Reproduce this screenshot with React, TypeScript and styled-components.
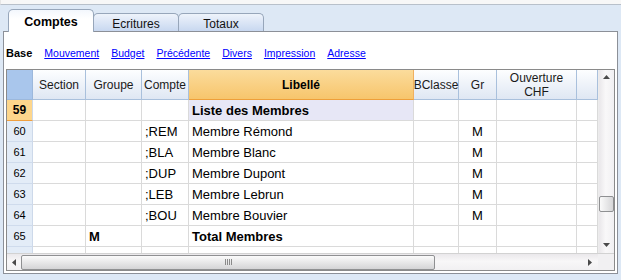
import React from "react";
import styled, { createGlobalStyle, css } from "styled-components";

const GlobalStyle = createGlobalStyle`
  html, body {
    margin: 0;
    padding: 0;
    background: #dde8f5;
    font-family: "Liberation Sans", Arial, sans-serif;
    color: #000;
  }
`;

const COLS = "26px 53px 56px 47px 225px 45px 38px 80px 1fr";

const Page = styled.div`
  width: 621px;
  height: 280px;
  overflow: hidden;
  background: #dde8f5;
`;

const TopStrip = styled.div`
  height: 4px;
  background: #f7f7f7;
  border-bottom: 1px solid #b8c0ca;
  border-left: 1px solid #e6e6e6;
`;

const TabBar = styled.div`
  display: flex;
  align-items: flex-end;
  height: 26px;
  padding-left: 8px;
`;

const Tab = styled.div<{ $active?: boolean }>`
  box-sizing: border-box;
  width: 86px;
  display: flex;
  align-items: center;
  justify-content: center;
  font-size: 12px;
  border: 1px solid #97a6ba;
  border-bottom: none;
  border-radius: 5px 5px 0 0;
  margin-right: -1px;
  ${({ $active }) =>
    $active
      ? css`
          height: 23px;
          font-weight: bold;
          font-size: 12.5px;
          background: linear-gradient(#f3f7fd, #ffffff 40%);
          position: relative;
          z-index: 2;
          margin-bottom: -1px;
          padding-top: 1px;
        `
      : css`
          height: 18px;
          padding-top: 2px;
          background: linear-gradient(#eef3fb, #c8d8f0);
          color: #111;
        `}
`;

const Panel = styled.div`
  margin: 0 3px;
  height: 241px;
  background: #fff;
  border: 1px solid #8c9098;
  display: flex;
  flex-direction: column;
`;

const LinkBar = styled.div`
  box-sizing: border-box;
  height: 37px;
  padding: 5px 0 0 2px;
  display: flex;
  align-items: center;
  gap: 12px;
  font-size: 10.5px;
`;

const BaseLabel = styled.span`
  font-weight: bold;
  font-size: 11px;
`;

const ViewLink = styled.a`
  color: #0000ff;
  text-decoration: underline;
  cursor: pointer;
`;

const GridFrame = styled.div`
  margin: 0 2px 2px;
  flex: 1;
  border: 1px solid #8a8a8a;
  display: flex;
  flex-direction: column;
  overflow: hidden;
`;

const GridMain = styled.div`
  display: flex;
  height: 183px;
`;

const TableArea = styled.div`
  flex: 1;
  overflow: hidden;
  display: grid;
  grid-template-columns: ${COLS};
  grid-auto-rows: 21px;
  grid-template-rows: 30px;
  align-content: start;
`;

const HeadCell = styled.div<{ $kind?: "corner" | "current" }>`
  box-sizing: border-box;
  display: flex;
  align-items: center;
  justify-content: center;
  text-align: center;
  font-size: 12px;
  line-height: 14px;
  color: #1a1a1a;
  border-right: 1px solid #a9c0dc;
  border-bottom: 1px solid #a9c0dc;
  background: linear-gradient(#fdfeff, #dfe7f3);
  ${({ $kind }) =>
    $kind === "corner" &&
    css`
      background: #a9c6ec;
      border-right-color: #9cb8dc;
      border-bottom-color: #9cb8dc;
    `}
  ${({ $kind }) =>
    $kind === "current" &&
    css`
      font-weight: bold;
      color: #000;
      background: linear-gradient(#fbdc9c, #f7c56c);
      border-right-color: #f0b060;
      border-bottom: 1px solid #ee9f3a;
    `}
`;

const RowNum = styled.div<{ $current?: boolean }>`
  box-sizing: border-box;
  display: flex;
  align-items: center;
  justify-content: center;
  font-size: 11px;
  background: #e3ecf7;
  border-right: 1px solid #cdd9ea;
  border-bottom: 1px solid #cfdbec;
  ${({ $current }) =>
    $current &&
    css`
      background: #fdd68c;
      font-weight: bold;
      font-size: 12px;
      border-bottom: 1px solid #f0a040;
    `}
`;

const Cell = styled.div<{ $bold?: boolean; $center?: boolean; $selected?: boolean }>`
  box-sizing: border-box;
  display: flex;
  align-items: center;
  padding: 0 3px;
  font-size: 13px;
  white-space: nowrap;
  overflow: hidden;
  border-right: 1px solid #dadada;
  border-bottom: 1px solid #dadada;
  background: ${({ $selected }) => ($selected ? "#e7e7f6" : "#fff")};
  font-weight: ${({ $bold }) => ($bold ? "bold" : "normal")};
  justify-content: ${({ $center }) => ($center ? "center" : "flex-start")};
`;

const VScroll = styled.div`
  width: 16px;
  border-left: 1px solid #ececec;
  background: linear-gradient(90deg, #e9e7ea, #f9f8f9 45%, #f1f0f2);
  display: flex;
  flex-direction: column;
  align-items: center;
  justify-content: space-between;
  padding: 5px 0 6px;
  box-sizing: border-box;
  position: relative;
`;

const VThumb = styled.div`
  position: absolute;
  left: 0;
  top: 126px;
  width: 15px;
  height: 16px;
  box-sizing: border-box;
  border: 1px solid #8f9092;
  border-radius: 2px;
  background: linear-gradient(90deg, #fafafa, #d6d6d8);
`;

const BottomRow = styled.div`
  display: flex;
  flex: 1;
  border-top: 1px solid #d2d2d2;
`;

const HScroll = styled.div`
  flex: 1;
  display: flex;
  align-items: center;
  padding: 0 6px 0 5px;
  background: linear-gradient(#eae8eb, #f8f7f8 45%, #f1f0f2);
  gap: 5px;
`;

const HThumb = styled.div`
  box-sizing: border-box;
  width: 414px;
  height: 15px;
  border: 1px solid #8f9092;
  border-radius: 2px;
  background: linear-gradient(#fbfbfb, #d4d4d6);
  display: flex;
  align-items: center;
  justify-content: center;
`;

const Grip = styled.div`
  display: flex;
  gap: 1px;
  & > span {
    width: 1px;
    height: 6px;
    background: #8a8a8a;
  }
`;

const Spacer = styled.div`
  flex: 1;
`;

const Corner = styled.div`
  width: 16px;
  background: #f1f0f2;
`;

const Arrow: React.FC<{ dir: "up" | "down" | "left" | "right" }> = ({ dir }) => {
  const pts = {
    up: "0,4 3.5,0 7,4",
    down: "0,0 3.5,4 7,0",
    left: "4,0 0,3.5 4,7",
    right: "0,0 4,3.5 0,7",
  }[dir];
  const vertical = dir === "up" || dir === "down";
  return (
    <svg width={vertical ? 7 : 4} height={vertical ? 4 : 7} viewBox={vertical ? "0 0 7 4" : "0 0 4 7"}>
      <polygon points={pts} fill="#4a4a4a" />
    </svg>
  );
};

type Row = {
  n: number;
  section?: string;
  groupe?: string;
  compte?: string;
  libelle?: string;
  gr?: string;
  bold?: boolean;
  current?: boolean;
};

const rows: Row[] = [
  { n: 59, libelle: "Liste des Membres", bold: true, current: true },
  { n: 60, compte: ";REM", libelle: "Membre Rémond", gr: "M" },
  { n: 61, compte: ";BLA", libelle: "Membre Blanc", gr: "M" },
  { n: 62, compte: ";DUP", libelle: "Membre Dupont", gr: "M" },
  { n: 63, compte: ";LEB", libelle: "Membre Lebrun", gr: "M" },
  { n: 64, compte: ";BOU", libelle: "Membre Bouvier", gr: "M" },
  { n: 65, groupe: "M", libelle: "Total Membres", bold: true },
  { n: 66 },
];

const links = ["Mouvement", "Budget", "Précédente", "Divers", "Impression", "Adresse"];

export default function App() {
  return (
    <Page>
      <GlobalStyle />
      <TopStrip />
      <TabBar>
        <Tab $active>Comptes</Tab>
        <Tab>Ecritures</Tab>
        <Tab>Totaux</Tab>
      </TabBar>
      <Panel>
        <LinkBar>
          <BaseLabel>Base</BaseLabel>
          {links.map((l) => (
            <ViewLink key={l}>{l}</ViewLink>
          ))}
        </LinkBar>
        <GridFrame>
          <GridMain>
            <TableArea>
              <HeadCell $kind="corner" />
              <HeadCell>Section</HeadCell>
              <HeadCell>Groupe</HeadCell>
              <HeadCell>Compte</HeadCell>
              <HeadCell $kind="current">Libellé</HeadCell>
              <HeadCell>BClasse</HeadCell>
              <HeadCell>Gr</HeadCell>
              <HeadCell>
                Ouverture
                <br />
                CHF
              </HeadCell>
              <HeadCell />
              {rows.map((r) => (
                <React.Fragment key={r.n}>
                  <RowNum $current={r.current}>{r.n === 66 ? "" : r.n}</RowNum>
                  <Cell>{r.section}</Cell>
                  <Cell $bold={r.bold}>{r.groupe}</Cell>
                  <Cell>{r.compte}</Cell>
                  <Cell $bold={r.bold} $selected={r.current}>
                    {r.libelle}
                  </Cell>
                  <Cell />
                  <Cell $center>{r.gr}</Cell>
                  <Cell />
                  <Cell />
                </React.Fragment>
              ))}
            </TableArea>
            <VScroll>
              <Arrow dir="up" />
              <VThumb />
              <Arrow dir="down" />
            </VScroll>
          </GridMain>
          <BottomRow>
            <HScroll>
              <Arrow dir="left" />
              <HThumb>
                <Grip>
                  <span />
                  <span />
                  <span />
                  <span />
                </Grip>
              </HThumb>
              <Spacer />
              <Arrow dir="right" />
            </HScroll>
            <Corner />
          </BottomRow>
        </GridFrame>
      </Panel>
    </Page>
  );
}
